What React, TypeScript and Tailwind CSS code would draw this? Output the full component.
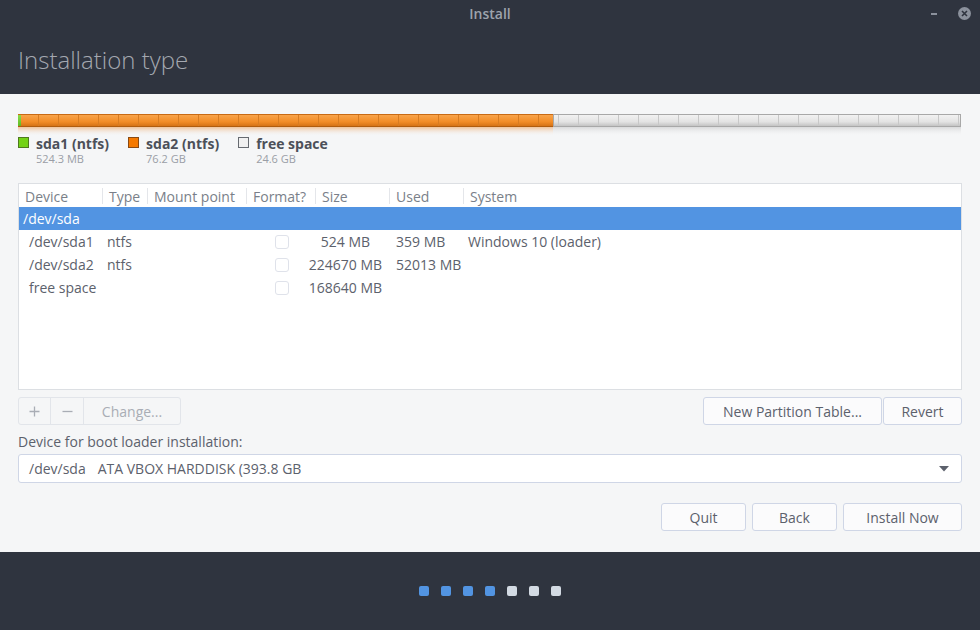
const font = { fontFamily: '"Open Sans", "Noto Sans", sans-serif' };

const columns = [
  { label: 'Device', w: 'w-[83px]' },
  { label: 'Type', w: 'w-[45px]' },
  { label: 'Mount point', w: 'w-[99px]' },
  { label: 'Format?', w: 'w-[69px]' },
  { label: 'Size', w: 'w-[74px]' },
  { label: 'Used', w: 'w-[74px]' },
  { label: 'System', w: 'flex-1' },
];

const rows = [
  { device: '/dev/sda1', type: 'ntfs', size: '524 MB', used: '359 MB', system: 'Windows 10 (loader)' },
  { device: '/dev/sda2', type: 'ntfs', size: '224670 MB', used: '52013 MB', system: '' },
  { device: 'free space', type: '', size: '168640 MB', used: '', system: '' },
];

function PartitionBar() {
  const W = 943;
  const green = 3;
  const orangeEnd = 535;
  const lines = [];
  for (let x = 20; x < W; x += 20) lines.push(x);
  return (
    <svg width={W} height={22} className="block">
      <defs>
        <linearGradient id="og" x1="0" y1="0" x2="0" y2="1">
          <stop offset="0" stopColor="#f9a750" />
          <stop offset="0.6" stopColor="#f28c26" />
          <stop offset="1" stopColor="#cf6d12" />
        </linearGradient>
        <linearGradient id="gg" x1="0" y1="0" x2="0" y2="1">
          <stop offset="0" stopColor="#f4f4f4" />
          <stop offset="0.6" stopColor="#e3e3e3" />
          <stop offset="1" stopColor="#bcbcbc" />
        </linearGradient>
        <linearGradient id="grn" x1="0" y1="0" x2="0" y2="1">
          <stop offset="0" stopColor="#8ee04a" />
          <stop offset="1" stopColor="#5cb822" />
        </linearGradient>
        <linearGradient id="ro" x1="0" y1="0" x2="0" y2="1">
          <stop offset="0" stopColor="#e99040" stopOpacity="0.5" />
          <stop offset="1" stopColor="#f5f6f7" stopOpacity="0" />
        </linearGradient>
        <linearGradient id="rg" x1="0" y1="0" x2="0" y2="1">
          <stop offset="0" stopColor="#b0b0b0" stopOpacity="0.4" />
          <stop offset="1" stopColor="#f5f6f7" stopOpacity="0" />
        </linearGradient>
      </defs>
      <rect x={0} y={0} width={green} height={13} fill="url(#grn)" />
      <rect x={green} y={0} width={orangeEnd - green} height={13} fill="url(#og)" />
      <rect x={orangeEnd} y={0} width={W - orangeEnd} height={13} fill="url(#gg)" />
      <rect x={0} y={13} width={orangeEnd} height={9} fill="url(#ro)" />
      <rect x={orangeEnd} y={13} width={W - orangeEnd} height={9} fill="url(#rg)" />
      {lines.map((x) => (
        <line
          key={x}
          x1={x + 0.5}
          x2={x + 0.5}
          y1={0}
          y2={13}
          stroke={x < orangeEnd ? '#d87c22' : '#c8c8c8'}
          strokeWidth={1}
        />
      ))}
      <rect x={orangeEnd + 0.5} y={0.5} width={W - orangeEnd - 1} height={12} fill="none" stroke="#a8a8a8" />
      <line x1={0} x2={orangeEnd} y1={0.5} y2={0.5} stroke="#c86a14" />
      <line x1={0} x2={orangeEnd} y1={12.5} y2={12.5} stroke="#b05c0e" />
    </svg>
  );
}

function Legend({ color, border, name, size }: { color: string; border: string; name: string; size: string }) {
  return (
    <div className="flex items-start gap-[7px]">
      <div className={`mt-[1px] h-[11px] w-[11px] border ${color} ${border}`} />
      <div className="flex flex-col">
        <span className="text-[14px] font-bold leading-[15px] text-[#4c5059]">{name}</span>
        <span className="mt-[2px] text-[11px] leading-[12px] text-[#9a9ea6]">{size}</span>
      </div>
    </div>
  );
}

function Checkbox() {
  return <div className="h-[14px] w-[14px] rounded-[3px] border border-[#dfe2ea] bg-white" />;
}

function Btn({ children, className = '' }: { children: React.ReactNode; className?: string }) {
  return (
    <button
      className={`flex h-[28px] items-center justify-center rounded-[3px] border border-[#cfd6e6] bg-[#fbfbfc] text-[14px] text-[#5c616c] ${className}`}
    >
      {children}
    </button>
  );
}

export default function App() {
  return (
    <div className="flex h-[630px] w-[980px] flex-col bg-[#2f343f] text-[#5c616c]" style={font}>
      {/* Title bar */}
      <div className="relative flex h-[28px] items-center justify-center">
        <span className="-mt-[2px] text-[14px] font-semibold text-[#9da3ad]">Install</span>
        <div className="absolute right-[9px] top-[7px] flex items-center gap-[21px]">
          <div className="h-[2px] w-[6px] bg-[#8b919c]" />
          <div className="flex h-[13px] w-[13px] items-center justify-center rounded-full bg-[#8b919c]">
            <svg width="7" height="7" viewBox="0 0 7 7">
              <path d="M1 1L6 6M6 1L1 6" stroke="#2f343f" strokeWidth="1.6" />
            </svg>
          </div>
        </div>
      </div>

      {/* Header */}
      <div className="flex h-[66px] items-start px-[18px] pt-[15px]">
        <h1 className="text-[24px] font-light leading-[34px] text-[#a4a8b0]">Installation type</h1>
      </div>

      {/* Content */}
      <div className="flex h-[458px] flex-col bg-[#f5f6f7] px-[18px] pt-[20px]">
        <PartitionBar />
        <div className="flex gap-[19px]">
          <Legend color="bg-[#73d216]" border="border-[#4e7a1e]" name="sda1 (ntfs)" size="524.3 MB" />
          <Legend color="bg-[#f57900]" border="border-[#8a4a12]" name="sda2 (ntfs)" size="76.2 GB" />
          <Legend color="bg-[#f0f0f0]" border="border-[#666a70]" name="free space" size="24.6 GB" />
        </div>

        {/* Table */}
        <div className="mt-[18px] flex h-[207px] flex-col border border-[#dcdfe3] bg-white">
          <div className="flex h-[23px] items-center pt-[1px] text-[14px] text-[#7a7f89]">
            {columns.map((c, i) => (
              <div key={c.label} className={`flex h-[16px] items-center ${c.w} ${i > 0 ? 'border-l border-[#e4e6ea] pl-[6px]' : 'pl-[6px]'}`}>
                {c.label}
              </div>
            ))}
          </div>
          <div className="flex h-[23px] items-center bg-[#5294e2] pl-[4px] text-[14px] text-white">/dev/sda</div>
          {rows.map((r) => (
            <div key={r.device} className="flex h-[23px] items-center text-[14px] text-[#5c616c]">
              <div className="w-[88px] shrink-0 whitespace-nowrap pl-[10px]">{r.device}</div>
              <div className="w-[168px] shrink-0">{r.type}</div>
              <div className="w-[20px] shrink-0">
                <Checkbox />
              </div>
              <div className="w-[101px] shrink-0 whitespace-nowrap text-center">{r.size}</div>
              <div className="w-[72px] shrink-0 whitespace-nowrap">{r.used}</div>
              <div className="whitespace-nowrap">{r.system}</div>
            </div>
          ))}
        </div>

        {/* Buttons */}
        <div className="mt-[7px] flex justify-between">
          <div className="flex h-[28px] rounded-[3px] border border-[#e2e5ea] text-[14px] text-[#a9adb5]">
            <div className="flex w-[32px] items-center justify-center border-r border-[#e2e5ea]">
              <svg width="11" height="11" viewBox="0 0 11 11">
                <path d="M5.5 0.5V10.5M0.5 5.5H10.5" stroke="#a9adb5" strokeWidth="1.3" />
              </svg>
            </div>
            <div className="flex w-[33px] items-center justify-center border-r border-[#e2e5ea]">
              <svg width="11" height="11" viewBox="0 0 11 11">
                <path d="M0.5 5.5H10.5" stroke="#a9adb5" strokeWidth="1.3" />
              </svg>
            </div>
            <div className="flex w-[96px] items-center justify-center">Change...</div>
          </div>
          <div className="flex gap-[1px]">
            <Btn className="w-[179px]">New Partition Table...</Btn>
            <Btn className="w-[79px]">Revert</Btn>
          </div>
        </div>

        <div className="mt-[7px] text-[14px] leading-[20px] text-[#5c616c]">Device for boot loader installation:</div>
        <div className="mt-[2px] flex h-[29px] items-center justify-between rounded-[3px] border border-[#cfd6e6] bg-white pl-[10px] pr-[12px] text-[14px]">
          <span>
            /dev/sda<span className="ml-[12px]">ATA VBOX HARDDISK (393.8 GB</span>
          </span>
          <svg width="10" height="6" viewBox="0 0 10 6">
            <path d="M0 0H10L5 5.5Z" fill="#5c616c" />
          </svg>
        </div>

        <div className="mt-[20px] flex justify-end gap-[6px]">
          <Btn className="w-[85px]">Quit</Btn>
          <Btn className="w-[85px]">Back</Btn>
          <Btn className="w-[119px]">Install Now</Btn>
        </div>
      </div>

      {/* Footer */}
      <div className="flex flex-1 items-center justify-center gap-[12px]">
        {[0, 1, 2, 3, 4, 5, 6].map((i) => (
          <div key={i} className={`h-[10px] w-[10px] rounded-[2px] ${i < 4 ? 'bg-[#5294e2]' : 'bg-[#d3dae3]'}`} />
        ))}
      </div>
    </div>
  );
}
